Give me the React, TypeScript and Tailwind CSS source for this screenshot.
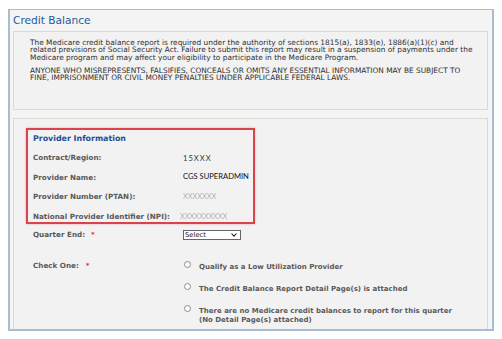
import React from "react";

function Radio() {
  return <div className="w-[7px] h-[7px] shrink-0 rounded-full border border-[#8c8c8c] bg-white" />;
}

export default function App() {
  const rows: { label: string; value: string; cls: string }[] = [
    { label: "Contract/Region:", value: "15XXX", cls: "text-[#333] mt-[2px] tracking-[1px]" },
    { label: "Provider Name:", value: "CGS SUPERADMIN", cls: "text-[#111] -mt-[2px]" },
    { label: "Provider Number (PTAN):", value: "XXXXXXX", cls: "text-[#888] font-light" },
    { label: "National Provider Identifier (NPI):", value: "XXXXXXXXXX", cls: "text-[#888] font-light -ml-[3px]" },
  ];
  return (
    <div className="w-[502px] h-[339px] bg-white pl-[8px] pt-[9px] font-['DejaVu_Sans',sans-serif]">
      <div className="w-[486px] h-[322px] bg-[#f4f4f4] border-t border-l-2 border-r-2 border-b-2 border-[#a9bdd2] flex flex-col">
        <div className="h-[21px] shrink-0 pl-[3px] pt-[2.5px] text-[10.6px] leading-[14px] text-[#26599c]">
          Credit Balance
        </div>
        <div className="ml-[3px] w-[475px] h-[79px] shrink-0 border border-[#dadad0] bg-[#f2f2f2] pl-[16px] pt-[6.5px] text-[7.4px] leading-[7.8px] text-[#303030] whitespace-nowrap">
          <p>
            The Medicare credit balance report is required under the authority of sections 1815(a), 1833(e), 1886(a)(1)(c) and
            <br />
            related previsions of Social Security Act. Failure to submit this report may result in a suspension of payments under the
            <br />
            Medicare program and may affect your eligibility to participate in the Medicare Program.
          </p>
          <p className="mt-[4.8px]">
            ANYONE WHO MISREPRESENTS, FALSIFIES, CONCEALS OR OMITS ANY ESSENTIAL INFORMATION MAY BE SUBJECT TO
            <br />
            FINE, IMPRISONMENT OR CIVIL MONEY PENALTIES UNDER APPLICABLE FEDERAL LAWS.
          </p>
        </div>
        <div className="ml-[3px] mt-[8px] w-[475px] flex-1 border-t border-l border-r border-[#dadad0] bg-[#f2f2f2] flex flex-col">
          <div className="ml-[12px] mt-[9px] w-[229px] h-[96px] border-2 border-[#d9434b] shadow-[0_0_2px_rgba(217,67,75,0.45)] pl-[5px]">
            <div className="h-[18px] leading-[18px] text-[7.9px] font-bold text-[#1f4f8f]">Provider Information</div>
            {rows.map((r) => (
              <div key={r.label} className="h-[19.5px] flex items-center whitespace-nowrap">
                <div className="w-[150px] shrink-0 text-[7.2px] font-bold text-[#5a5a5a] leading-[9px]">{r.label}</div>
                <div className={"font-['Lato',sans-serif] text-[7.6px] leading-[9px] " + r.cls}>{r.value}</div>
              </div>
            ))}
          </div>
          <div className="mt-[6px] pl-[19px] flex items-start whitespace-nowrap">
            <div className="w-[150px] shrink-0 text-[7.2px] font-bold text-[#5a5a5a] leading-[9px]">
              Quarter End:<span className="ml-[6px] text-[#e0303a]">*</span>
            </div>
            <div className="w-[58px] h-[10px] border border-[#666] bg-white flex items-center justify-between pl-[1px] pr-[3px]">
              <span className="text-[6.8px] leading-[8px] text-[#222]">Select</span>
              <svg width="6" height="4" viewBox="0 0 6 4" className="shrink-0">
                <path d="M0.5 0.5 L3 3.2 L5.5 0.5" fill="none" stroke="#222" strokeWidth="1.1" />
              </svg>
            </div>
          </div>
          <div className="mt-[20.5px] pl-[19px] flex items-start whitespace-nowrap">
            <div className="w-[151px] shrink-0 text-[7.2px] font-bold text-[#5a5a5a] leading-[9px]">
              Check One:<span className="ml-[7px] text-[#e0303a]">*</span>
            </div>
            <div className="flex flex-col gap-[10.5px] text-[7px] font-bold text-[#5a5a5a] leading-[9px]">
              <div className="flex items-start gap-[8px]">
                <Radio />
                <div className="mt-[2.5px]">Qualify as a Low Utilization Provider</div>
              </div>
              <div className="flex items-start gap-[8px]">
                <Radio />
                <div className="mt-[2.5px]">The Credit Balance Report Detail Page(s) is attached</div>
              </div>
              <div className="flex items-start gap-[8px]">
                <Radio />
                <div className="mt-[2.5px]">
                  There are no Medicare credit balances to report for this quarter
                  <br />
                  (No Detail Page(s) attached)
                </div>
              </div>
            </div>
          </div>
        </div>
      </div>
    </div>
  );
}
